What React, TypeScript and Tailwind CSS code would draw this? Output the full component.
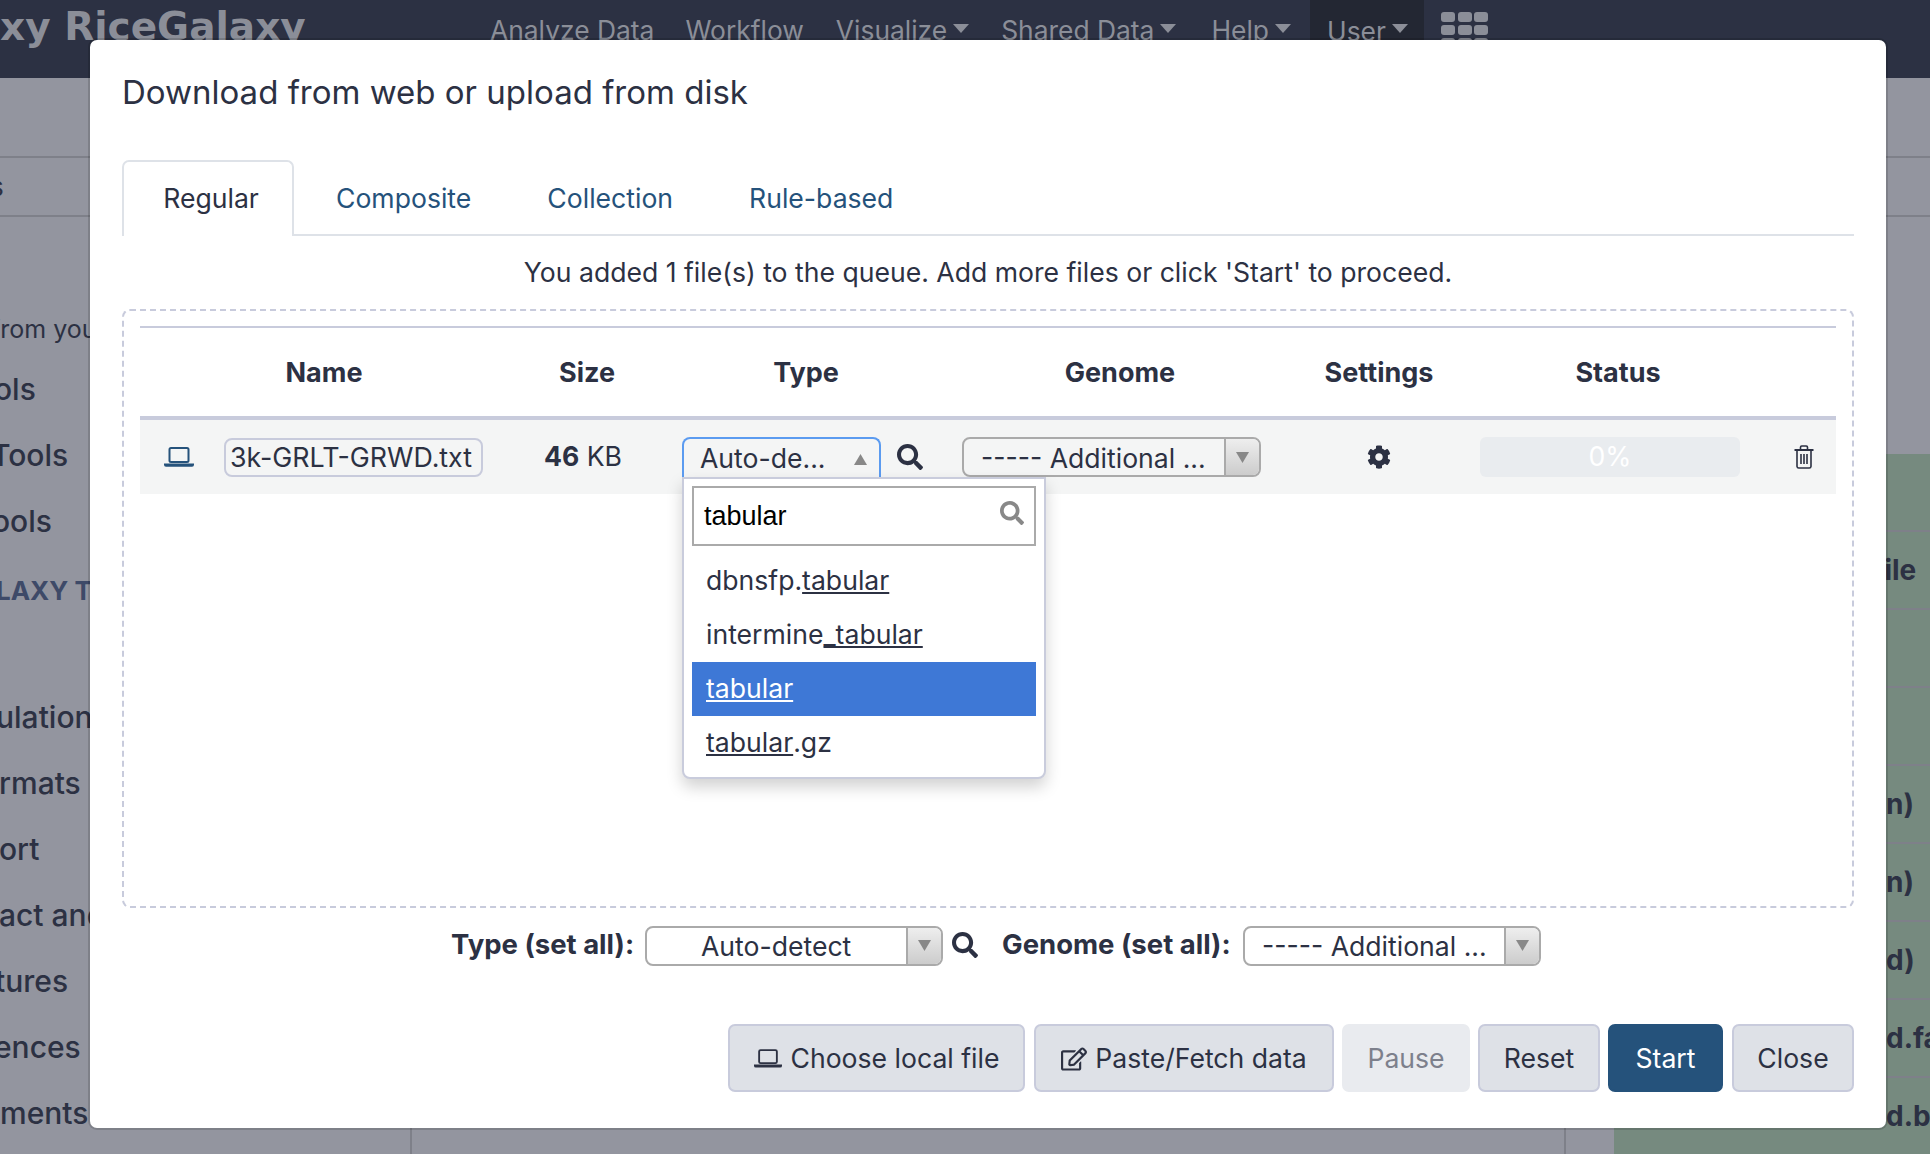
import React from "react";
import { FaSearch, FaCog, FaRegEdit } from "react-icons/fa";

const Laptop = ({ className }: { className: string }) => (
  <svg viewBox="0 0 30 20" className={className} fill="none">
    <rect x="5.5" y="1" width="19" height="14" rx="1.5" stroke="currentColor" strokeWidth="2" />
    <path d="M0 16.5h30v1.2a2 2 0 0 1-2 2H2a2 2 0 0 1-2-2z" fill="currentColor" />
  </svg>
);

const Trash = ({ className }: { className: string }) => (
  <svg viewBox="0 0 20 24" className={className} fill="none" stroke="currentColor" strokeWidth="1.6">
    <path d="M0.5 5h19" strokeWidth="2" />
    <path d="M6.5 4.5V2.2a1.2 1.2 0 0 1 1.2-1.2h4.6a1.2 1.2 0 0 1 1.2 1.2v2.3" />
    <path d="M3 5v16.5A1.7 1.7 0 0 0 4.700 23h10.600a1.700 1.700 0 0 0 1.700-1.500V5" />
    <path d="M7 9v10M10 9v10M13 9v10" />
  </svg>
);

const Caret = () => (
  <svg viewBox="0 0 16 9" className="w-[16px] h-[9px] ml-[6px] mt-[-6px] shrink-0">
    <path d="M0 0h16L8 9z" fill="#8b8e98" />
  </svg>
);

const Select = ({ text, center, className }: { text: string; center?: boolean; className: string }) => (
  <div className={`flex h-[40px] rounded-[8px] border-2 border-[#aaaaaa] overflow-hidden bg-transparent ${className}`}>
    <div className={`flex-1 flex items-center pt-[2px] text-[26.6px] leading-none text-[#2c3143] whitespace-nowrap ${center ? "pl-[54px]" : "pl-[17px]"}`}>
      {text}
    </div>
    <div className="w-[35px] border-l-2 border-[#aaaaaa] bg-linear-to-b from-[#eeeeee] to-[#cccccc] flex items-center justify-center">
      <svg viewBox="0 0 13 11" className="w-[13px] h-[11px]">
        <path d="M0 0h13L6.500 11z" fill="#888888" />
      </svg>
    </div>
  </div>
);

const Btn = ({ className, children }: { className: string; children: React.ReactNode }) => (
  <div className={`h-[68px] rounded-[7px] border-2 pt-[1px] flex items-center justify-center text-[26.6px] ${className}`}>{children}</div>
);

const Row = ({ children, className = "" }: { children: React.ReactNode; className?: string }) => (
  <div className={`h-[66px] flex items-center whitespace-nowrap ${className}`}>{children}</div>
);

export default function App() {
  return (
    <div className="relative w-[1930px] h-[1154px] overflow-hidden bg-[#93959f] text-[#2c3143] font-['Inter','Liberation_Sans',sans-serif] flex flex-col">
      {/* page behind the modal */}
      <div className="h-[78px] shrink-0 bg-[#2c3143] flex items-start text-[#8b8e98] whitespace-nowrap">
        <div className="w-[490px] shrink-0 text-[39px] font-bold leading-[54px] font-['DejaVu_Sans',sans-serif]">xy RiceGalaxy</div>
        <div className="flex items-center h-[62px] text-[26.4px] w-[820px] shrink-0">
          <span>Analyze Data</span>
          <span className="ml-[31px]">Workflow</span>
          <span className="ml-[32px]">Visualize</span>
          <Caret />
          <span className="ml-[32px]">Shared Data</span>
          <Caret />
          <span className="ml-[35px]">Help</span>
          <Caret />
        </div>
        <div className="w-[114px] h-[78px] bg-[#232733] flex items-start pl-[17px] pt-[16px] text-[26.4px] leading-[30px]">
          <span>User</span>
          <span className="mt-[14px] flex"><Caret /></span>
        </div>
        <div className="ml-[17px] mt-[12px] grid grid-cols-3 gap-x-[2.500px] gap-y-[3px]">
          {Array.from({ length: 9 }).map((_, i) => (
            <div key={i} className="w-[14px] h-[10px] rounded-[3px] bg-[#8b8e98]" />
          ))}
        </div>
      </div>
      <div className="h-[80px] shrink-0 border-b-2 border-[#7e8089]" />
      <div className="h-[59px] shrink-0 border-b-2 border-[#7e8089] flex items-center text-[26px] -ml-[10px]">
        <span>s</span>
      </div>
      <div className="flex-1 flex min-h-0">
        <div className="w-[412px] shrink-0 border-r-2 border-[#7e8089] font-medium text-[30px] overflow-hidden">
          <div className="mt-[100px] h-[26px] flex items-center text-[25px] font-normal -ml-[9px] whitespace-nowrap">from your</div>
          <div className="h-[13px]" />
          <Row className="-ml-[6px]">ols</Row>
          <Row className="-ml-[9px]">Tools</Row>
          <Row className="-ml-[8px]">ools</Row>
          <div className="h-[72px] flex items-center text-[26px] font-bold text-[#3e4a68] -ml-[4px] whitespace-nowrap">LAXY TOOLS</div>
          <div className="h-[58px]" />
          <Row className="-ml-[4px]">ulation</Row>
          <Row className="-ml-[1px]">rmats</Row>
          <Row className="-ml-[1px]">ort</Row>
          <Row className="-ml-[1px]">act and</Row>
          <Row className="-ml-[5px]">tures</Row>
          <Row className="-ml-[6px]">ences</Row>
          <Row>ments</Row>
        </div>
        <div className="w-[1154px] shrink-0 border-r-2 border-[#7e8089]" />
        <div className="w-[48px] shrink-0" />
        <div className="flex-1 min-w-0 mt-[237px] bg-[#768a7f] font-bold text-[28px] overflow-hidden">
          {["", "File", "", "", "n)", "n)", "d)", "d.fasta", "d.bed"].map((t, i) => (
            <div key={i} className="h-[78px] border-b-2 border-[#7e8089] flex items-center pl-[272px] whitespace-nowrap">
              <span className={t === "File" ? "-ml-[18px]" : ""}>{t}</span>
            </div>
          ))}
        </div>
      </div>

      {/* modal */}
      <div className="absolute left-[90px] top-[40px] w-[1796px] h-[1088px] rounded-[7px] bg-white shadow-[0_0_0_2px_rgba(0,0,0,0.14)] px-[32px] pt-[2px] flex flex-col">
        <div className="h-[100px] shrink-0 flex items-center text-[33px] leading-none">Download from web or upload from disk</div>
        <div className="mt-[18px] h-[76px] shrink-0 border-b-2 border-[#dee2e8] flex text-[26.6px] text-[#25527b]">
          <div className="w-[172px] h-[76px] border-2 border-b-0 border-[#dee2e8] rounded-t-[7px] bg-white text-[#2c3143] flex items-center justify-center pl-[6px]">Regular</div>
          <div className="ml-[4px] px-[38px] pt-[4px] flex items-center">Composite</div>
          <div className="px-[38px] pt-[4px] flex items-center">Collection</div>
          <div className="px-[38px] pt-[4px] flex items-center">Rule-based</div>
        </div>
        <div className="h-[73px] shrink-0 flex items-center justify-center text-[26.6px]">
          You added 1 file(s) to the queue. Add more files or click 'Start' to proceed.
        </div>

        <div className="h-[599px] shrink-0 border-2 border-dashed border-[#c8cbdc] rounded-[8px] px-[16px] pt-[15px]">
          <div className="h-[94px] border-t-2 border-b-4 border-[#c8cbdc] pt-[2px] flex items-center font-bold text-[27px] text-center">
            <div className="w-[368px]">Name</div>
            <div className="w-[158px]">Size</div>
            <div className="w-[280px]">Type</div>
            <div className="w-[348px]">Genome</div>
            <div className="w-[170px]">Settings</div>
            <div className="w-[308px]">Status</div>
          </div>
          <div className="relative h-[74px] bg-[#f4f5f5] flex items-center text-[26.6px]">
            <Laptop className="ml-[24px] w-[30px] h-[20px] text-[#25527b] shrink-0" />
            <div className="ml-[30px] w-[259px] h-[39px] shrink-0 rounded-[8px] border-2 border-[#c8cbdc] flex items-center pl-[4px] whitespace-nowrap text-[26.8px]">3k-GRLT-GRWD.txt</div>
            <div className="ml-[61px] w-[79px] shrink-0 whitespace-nowrap"><span className="font-bold">46</span> KB</div>
            <div className="ml-[59px] w-[199px] h-[40px] shrink-0 rounded-t-[8px] border-2 border-b-0 border-[#5b9bf0] flex items-center pl-[16px] pr-[12px] pt-[2px] justify-between">
              <span className="whitespace-nowrap">Auto-de...</span>
              <svg viewBox="0 0 13 11" className="w-[13px] h-[11px]"><path d="M0 11h13L6.500 0z" fill="#888888" /></svg>
            </div>
            <FaSearch className="ml-[16px] w-[26px] h-[26px] shrink-0" />
            <Select text="----- Additional ..." className="ml-[39px] w-[299px] shrink-0" />
            <FaCog className="ml-[106px] w-[24px] h-[24px] shrink-0" />
            <div className="ml-[89px] w-[260px] h-[40px] shrink-0 rounded-[6px] bg-[#e9ecef] text-white flex items-center justify-center">0%</div>
            <Trash className="ml-[54px] w-[20px] h-[24px] shrink-0" />

            <div className="absolute left-[542px] top-[57px] w-[364px] h-[302px] rounded-b-[8px] bg-white border-2 border-[#c9ccdc] px-[8px] pt-[7px] shadow-[0_8px_16px_rgba(0,0,0,0.18)]">
              <div className="h-[60px] border-2 border-[#aaaaaa] flex items-center justify-between pl-[10px] pr-[10px] text-black text-[27px] font-['Liberation_Sans',sans-serif]">
                <span>tabular</span>
                <FaSearch className="w-[24px] h-[24px] text-[#888888] -mt-[6px]" />
              </div>
              <div className="mt-[8px]">
                <div className="h-[54px] flex items-center pl-[14px]">dbnsfp.<span className="underline">tabular</span></div>
                <div className="h-[54px] flex items-center pl-[14px]">intermine<span className="underline">_tabular</span></div>
                <div className="h-[54px] flex items-center pl-[14px] bg-[#3e78d6] text-white"><span className="underline">tabular</span></div>
                <div className="h-[54px] flex items-center pl-[14px]"><span className="underline">tabular</span>.gz</div>
              </div>
            </div>
          </div>
        </div>

        <div className="h-[74px] shrink-0 flex items-center pl-[329px] text-[27.5px]">
          <div className="w-[185px] font-bold whitespace-nowrap shrink-0">Type (set all):</div>
          <Select text="Auto-detect" center className="ml-[9px] mt-[1px] w-[298px] shrink-0" />
          <FaSearch className="ml-[9px] w-[26px] h-[26px] shrink-0" />
          <div className="ml-[24px] w-[231px] font-bold whitespace-nowrap shrink-0">Genome (set all):</div>
          <Select text="----- Additional ..." className="ml-[10px] mt-[1px] w-[298px] shrink-0" />
        </div>

        <div className="mt-[42px] flex justify-end gap-[8px]">
          <Btn className="w-[297px] mr-[1px] bg-[#dee1e7] border-[#c8cbdc]">
            <Laptop className="w-[28px] h-[19px] mr-[9px]" />
            Choose local file
          </Btn>
          <Btn className="w-[300px] bg-[#dee1e7] border-[#c8cbdc]">
            <FaRegEdit className="w-[26px] h-[24px] mr-[8px]" />
            Paste/Fetch data
          </Btn>
          <Btn className="w-[128px] bg-[#e9ebef] border-[#e9ebef] text-[#7d808c]">Pause</Btn>
          <Btn className="w-[122px] bg-[#dee1e7] border-[#c8cbdc]">Reset</Btn>
          <Btn className="w-[115px] mr-[1px] bg-[#25527b] border-[#25527b] text-white">Start</Btn>
          <Btn className="w-[122px] bg-[#dee1e7] border-[#c8cbdc]">Close</Btn>
        </div>
      </div>
    </div>
  );
}
